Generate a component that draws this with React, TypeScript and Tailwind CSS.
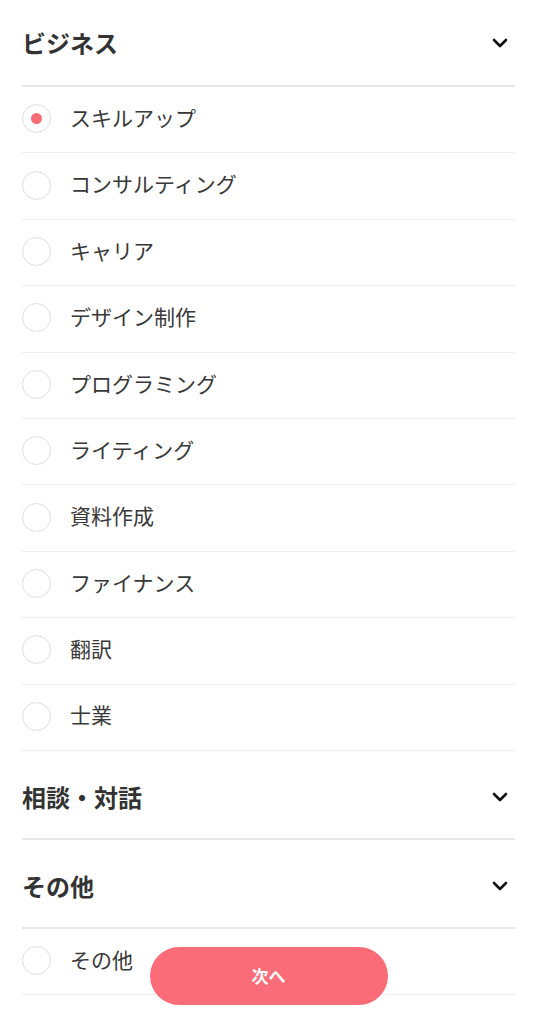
import { useState } from 'react';

const business = [
  'スキルアップ',
  'コンサルティング',
  'キャリア',
  'デザイン制作',
  'プログラミング',
  'ライティング',
  '資料作成',
  'ファイナンス',
  '翻訳',
  '士業',
];

const Chevron = () => (
  <svg width="16" height="10" viewBox="0 0 16 10" fill="none" className="mr-[7px]">
    <path d="M2 2l6 6 6-6" stroke="#111" strokeWidth="2.6" strokeLinecap="round" strokeLinejoin="round" />
  </svg>
);

const SectionHeader = ({ title, first }: { title: string; first?: boolean }) => (
  <div
    className={`${first ? 'h-[87px] pt-[1px]' : 'h-[89px] pt-[5px]'} flex items-center justify-between border-b-2 border-[#e6e6eb]`}
  >
    <h2 className="text-[24px] font-bold text-[#333]">{title}</h2>
    <Chevron />
  </div>
);

const RadioRow = ({ label, checked, onClick }: { label: string; checked: boolean; onClick: () => void }) => (
  <button
    onClick={onClick}
    className="w-full h-[66.4px] pb-[2px] flex items-center border-b border-[#efeff2] text-left"
  >
    <span className="w-[29px] h-[29px] rounded-full border-[1.5px] border-[#dcdee5] flex items-center justify-center shrink-0">
      {checked && <span className="w-[11px] h-[11px] rounded-full bg-[#f96c77]" />}
    </span>
    <span className="ml-[19px] text-[21px] text-[#383838] -translate-y-[1px]">{label}</span>
  </button>
);

export default function App() {
  const [selected, setSelected] = useState('スキルアップ');

  return (
    <div
      className="min-h-screen bg-white px-[22px]"
      style={{ fontFamily: '"Noto Sans CJK JP", "Noto Sans", sans-serif' }}
    >
      <SectionHeader title="ビジネス" first />
      {business.map((item) => (
        <RadioRow key={item} label={item} checked={selected === item} onClick={() => setSelected(item)} />
      ))}

      <SectionHeader title="相談・対話" />

      <SectionHeader title="その他" />
      <RadioRow label="その他" checked={selected === 'その他-other'} onClick={() => setSelected('その他-other')} />

      <button className="fixed bottom-[19px] left-1/2 -translate-x-1/2 w-[238px] h-[58px] rounded-full bg-[#fa6d78] text-white text-[17px] font-bold">
        次へ
      </button>
    </div>
  );
}
